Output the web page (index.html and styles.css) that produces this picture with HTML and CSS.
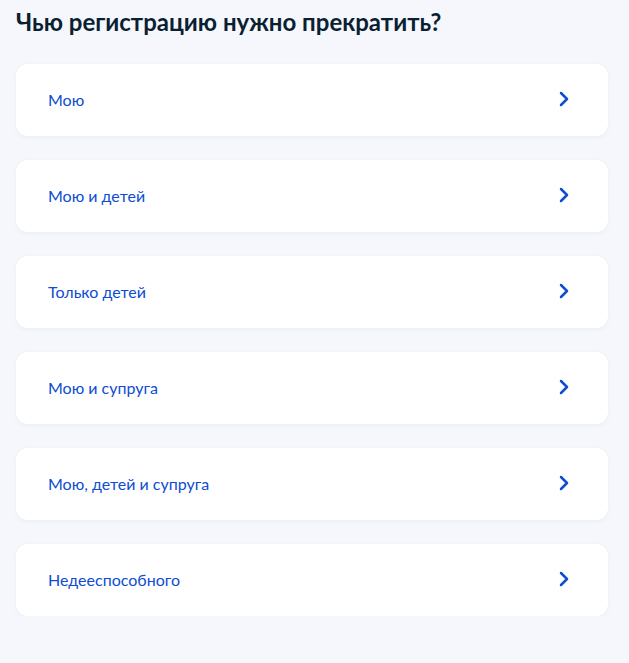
FILE: index.html
```html
<!DOCTYPE html>
<html lang="ru">
<head>
    <meta charset="UTF-8">
    <meta name="viewport" content="width=device-width, initial-scale=1.0">
    <title>Прекращение регистрации</title>
    <link rel="stylesheet" href="styles.css">
</head>
<body>
    <main class="page">
        <h1>Чью регистрацию нужно прекратить?</h1>

        <div class="options">
            <a href="#" class="option">
                <span>Мою</span>
                <svg class="chevron" width="12" height="16" viewBox="0 0 12 16"><path d="M3 2l6 6-6 6"/></svg>
            </a>
            <a href="#" class="option">
                <span>Мою и детей</span>
                <svg class="chevron" width="12" height="16" viewBox="0 0 12 16"><path d="M3 2l6 6-6 6"/></svg>
            </a>
            <a href="#" class="option">
                <span>Только детей</span>
                <svg class="chevron" width="12" height="16" viewBox="0 0 12 16"><path d="M3 2l6 6-6 6"/></svg>
            </a>
            <a href="#" class="option">
                <span>Мою и супруга</span>
                <svg class="chevron" width="12" height="16" viewBox="0 0 12 16"><path d="M3 2l6 6-6 6"/></svg>
            </a>
            <a href="#" class="option">
                <span>Мою, детей и супруга</span>
                <svg class="chevron" width="12" height="16" viewBox="0 0 12 16"><path d="M3 2l6 6-6 6"/></svg>
            </a>
            <a href="#" class="option">
                <span>Недееспособного</span>
                <svg class="chevron" width="12" height="16" viewBox="0 0 12 16"><path d="M3 2l6 6-6 6"/></svg>
            </a>
        </div>
    </main>
</body>
</html>
```

FILE: styles.css
```css
* {
    margin: 0;
    padding: 0;
    box-sizing: border-box;
}

:root {
    --bg: #f5f7fc;
    --text-dark: #0b1f33;
    --link: #0d4cd3;
}

body {
    background: var(--bg);
    font-family: Lato, "Noto Sans", sans-serif;
}

.page {
    padding: 7px 21px 0 16px;
}

h1 {
    color: var(--text-dark);
    font-size: 24px;
    font-weight: 700;
    line-height: 30px;
    margin-bottom: 27px;
}

.options {
    display: flex;
    flex-direction: column;
    gap: 24px;
}

.option {
    display: flex;
    align-items: center;
    justify-content: space-between;
    height: 72px;
    padding: 0 38px 2px 32px;
    background: white;
    border-radius: 12px;
    box-shadow: 0 1px 4px rgba(14, 60, 160, 0.06);
    color: var(--link);
    font-size: 16px;
    text-decoration: none;
}

.chevron {
    fill: none;
    stroke: var(--link);
    stroke-width: 2.5;
    stroke-linecap: round;
    stroke-linejoin: round;
}
```
